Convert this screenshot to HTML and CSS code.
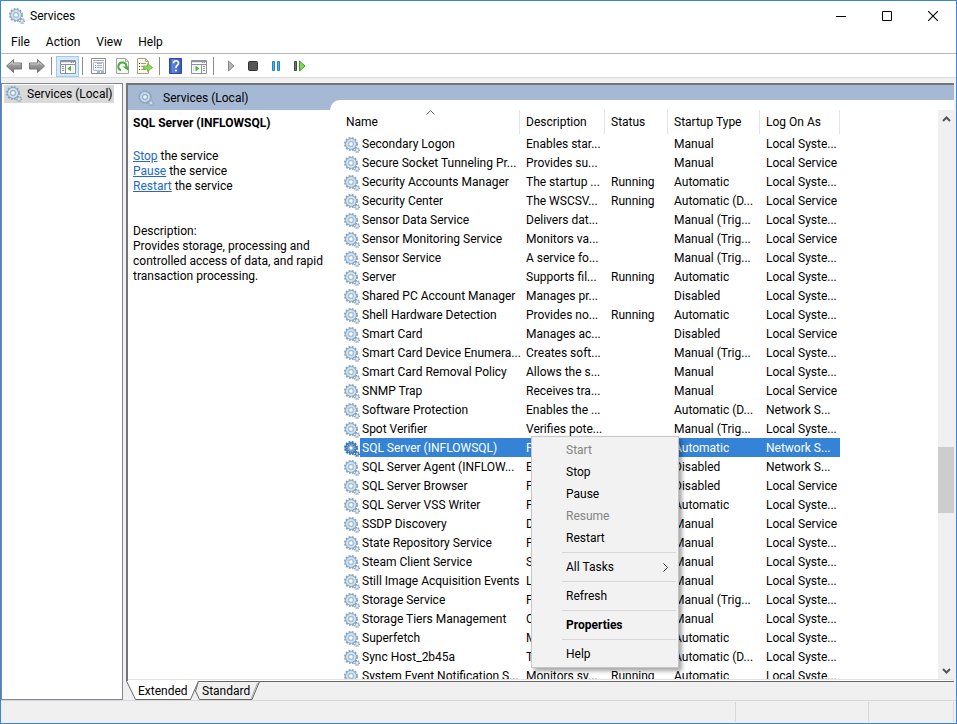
FILE: index.html
```html
<!DOCTYPE html>
<html lang="en">
<head>
<meta charset="utf-8">
<title>Services</title>
<link rel="stylesheet" href="styles.css">
</head>
<body>
<svg class="defs" aria-hidden="true">
  <symbol id="gears" viewBox="0 0 16 16">
    <circle cx="7" cy="7" r="6" fill="none" stroke="#8aa3b8" stroke-width="2" stroke-dasharray="1.9 1.24"/>
    <circle cx="7" cy="7" r="4.2" fill="none" stroke="#86a2ba" stroke-width="3"/>
    <circle cx="7" cy="7" r="4" fill="none" stroke="#c9e4f5" stroke-width="2"/>
    <circle cx="7" cy="7" r="2.3" fill="#fff" stroke="#7893aa" stroke-width=".7"/>
    <circle cx="13" cy="13" r="2.4" fill="none" stroke="#8499ab" stroke-width="1.2" stroke-dasharray="1 .88"/>
    <circle cx="13" cy="13" r="1.5" fill="#fff" stroke="#a3bccd" stroke-width="1.2"/>
  </symbol>
  <symbol id="gears-selected" viewBox="0 0 16 16">
    <circle cx="7" cy="7" r="6" fill="none" stroke="#3477b4" stroke-width="2" stroke-dasharray="1.9 1.24"/>
    <circle cx="7" cy="7" r="4.2" fill="none" stroke="#3375b5" stroke-width="3"/>
    <circle cx="7" cy="7" r="4" fill="none" stroke="#8fc0e8" stroke-width="1.5" stroke-dasharray="1 1"/>
    <circle cx="7" cy="7" r="2.2" fill="#fff" stroke="#3c78ad" stroke-width=".8"/>
    <circle cx="13" cy="13" r="2.4" fill="none" stroke="#33649b" stroke-width="1.2" stroke-dasharray="1 .88"/>
    <circle cx="13" cy="13" r="1.5" fill="#cfe4f5" stroke="#3c78ad" stroke-width="1.2"/>
  </symbol>
  <linearGradient id="steel" x1="0" y1="0" x2="0" y2="1"><stop offset="0" stop-color="#b5b5b5"/><stop offset="1" stop-color="#777"/></linearGradient>
  <linearGradient id="blue" x1="0" y1="0" x2="1" y2="0"><stop offset="0" stop-color="#2c4fb4"/><stop offset=".25" stop-color="#6385dc"/><stop offset="1" stop-color="#3557bb"/></linearGradient>
</svg>

<div class="window">
  <header class="titlebar">
    <svg class="icon"><use href="#gears"/></svg>
    <h1>Services</h1>
    <div class="caption">
      <button aria-label="Minimize"><svg width="10" height="10"><path d="M0 5.5h10" stroke="#000"/></svg></button>
      <button aria-label="Maximize"><svg width="10" height="10"><path d="M.5.5h9v9h-9z" fill="none" stroke="#000"/></svg></button>
      <button aria-label="Close"><svg width="10" height="10"><path d="M0 0l10 10M10 0L0 10" stroke="#000" stroke-width="1.1"/></svg></button>
    </div>
  </header>

  <nav class="menubar" aria-label="Main menu">
    <button>File</button><button>Action</button><button>View</button><button>Help</button>
  </nav>

  <div class="toolbar" role="toolbar" aria-label="Tools">
    <button aria-label="Back"><svg class="icon" viewBox="0 0 16 16"><path d="M.5 8L7.5 1.5v3.500h8v6h-8v3.500z" fill="url(#steel)" stroke="#777"/><path d="M2.500 7.500L6.500 4v2h8" fill="none" stroke="#ccc"/></svg></button>
    <button aria-label="Forward"><svg class="icon" viewBox="0 0 16 16"><path d="M15.500 8L8.500 1.500v3.500h-8v6h8v3.500z" fill="url(#steel)" stroke="#777"/><path d="M1.500 6h8V4l3.500 3.500" fill="none" stroke="#ccc"/></svg></button>
    <span class="sep"></span>
    <button class="pressed" aria-label="Show console tree"><svg class="icon" viewBox="0 0 16 16"><path d="M.5 2.500h15v13H.5z" fill="#fff" stroke="#8c929b"/><path d="M1 3h14v2H1z" fill="#8c96a8"/><path d="M1 4.500h10M12 4.500h1M14 4.500h1" stroke="#dfe5ee"/><path d="M1 6.500h14M5.500 7v8" stroke="#8c929b"/><path d="M2 8.500h2M2 10.500h2M2 12.500h2" stroke="#778ca8"/><path d="M11 7.500v6L7.500 10.500z" fill="#54b038"/><path d="M13 7v8" stroke="#dfe5ee"/></svg></button>
    <span class="sep"></span>
    <button aria-label="Properties"><svg class="icon" viewBox="0 0 16 16"><path d="M.5.5h14v15H.5z" fill="#fff" stroke="#8c8c8c"/><path d="M2 2.500h11" stroke="#a0a7b0"/><path d="M2.500 4.500h10v8h-10z" fill="#f4f6f8" stroke="#b4bbc5"/><path d="M4 7.500h1M4 9.500h1" stroke="#38a8d8"/><path d="M6 5.500h5M6 7.500h5M6 9.500h5" stroke="#a9b0ba"/><path d="M6 14h3M10 14h3" stroke="#7fc4e4" stroke-width="2"/></svg></button>
    <button aria-label="Refresh"><svg class="icon" viewBox="0 0 16 16"><path d="M2.500.5h9l3 3v12h-12z" fill="#fafafa" stroke="#a5a5a5"/><path d="M11.500.5v3h3" fill="none" stroke="#a5a5a5"/><path d="M7 12.300A4 4 0 1 1 12.300 9" fill="none" stroke="#4cab3c" stroke-width="2"/><path d="M8.500 8.500h6v4.500z" fill="#4cab3c"/></svg></button>
    <button aria-label="Export list"><svg class="icon" viewBox="0 0 16 16"><path d="M.5.5h8l3 3v12H.5z" fill="#fffbe4" stroke="#a5a18b"/><path d="M8.500.5v3h3" fill="none" stroke="#a5a18b"/><path d="M2 5.500h1M2 8.500h1M2 11.500h1" stroke="#333"/><path d="M4 5.500h5M4 8.500h4M4 11.500h5" stroke="#9a90b4"/><path d="M6.500 8h4V5.500l5 4-5 4V11h-4z" fill="#90d45d" stroke="#5fb13a" stroke-width=".8"/></svg></button>
    <span class="sep"></span>
    <button aria-label="Help"><svg class="icon" viewBox="0 0 16 16"><path d="M1.500.5h12v15h-12z" fill="url(#blue)" stroke="#2c48a4"/><path d="M5.500 5.300c0-3.500 5.200-3.300 5 0C10.300 7.400 8 7.200 8 10" fill="none" stroke="#fff" stroke-width="1.700"/><circle cx="8" cy="12.500" r="1.100" fill="#fff"/></svg></button>
    <button aria-label="Show action pane"><svg class="icon" viewBox="0 0 16 16"><path d="M.5 2.500h15v13H.5z" fill="#fff" stroke="#8c929b"/><path d="M1 3h14v2H1z" fill="#8c96a8"/><path d="M1 4.500h10M12 4.500h1M14 4.500h1" stroke="#dfe5ee"/><path d="M1 6.500h14M10.500 7v8" stroke="#8c929b"/><path d="M12 8.500h2M12 10.500h2M12 12.500h2" stroke="#778ca8"/><path d="M4.500 7.500v6l4-3z" fill="#54b038"/><path d="M2.500 7v8" stroke="#dfe5ee"/></svg></button>
    <span class="sep"></span>
    <button aria-label="Start service"><svg class="icon" viewBox="0 0 16 16"><path d="M6.500 3v10l5.500-5z" fill="#b4b4b4" stroke="#888"/></svg></button>
    <button aria-label="Stop service"><svg class="icon" viewBox="0 0 16 16"><rect x="3.500" y="3.500" width="9" height="9" rx="1" fill="#555" stroke="#333"/></svg></button>
    <button aria-label="Pause service"><svg class="icon" viewBox="0 0 16 16"><path d="M4.500 3.500h2v9h-2zM9.500 3.500h2v9h-2z" fill="#51b4ec" stroke="#2382c2"/></svg></button>
    <button aria-label="Restart service"><svg class="icon" viewBox="0 0 16 16"><path d="M3.500 3.500h2v9h-2z" fill="#777" stroke="#444"/><path d="M8.500 3v10l5.500-5z" fill="#7ed957" stroke="#35a020"/></svg></button>
  </div>

  <main class="workspace">
    <aside class="tree"><button class="node"><svg class="icon"><use href="#gears"/></svg>Services (Local)</button></aside>

    <section class="right">
      <div class="pane">
        <div class="pane-head">
          <h2><svg class="icon"><use href="#gears"/></svg>Services (Local)</h2>
          <span class="curve"></span>
        </div>
        <div class="pane-body">
          <div class="details">
            <h3>SQL Server (INFLOWSQL)</h3>
            <p><a href="#stop">Stop</a> the service<br><a href="#pause">Pause</a> the service<br><a href="#restart">Restart</a> the service</p>
            <p class="about">Description:<br>Provides storage, processing and controlled access of data, and rapid transaction processing.</p>
          </div>
          <div class="list">
            <div class="clip">
              <table>
                <colgroup><col class="c-name"><col class="c-desc"><col class="c-status"><col class="c-type"><col class="c-logon"></colgroup>
                <thead><tr>
                  <th>Name<svg class="sort" width="9" height="5"><path d="M.5 4.500l4-4 4 4" fill="none" stroke="#666"/></svg></th>
                  <th>Description</th><th>Status</th><th>Startup Type</th><th>Log On As</th>
                </tr></thead>
                <tbody id="rows"></tbody>
              </table>
            </div>
            <div class="scrollbar">
              <button aria-label="Scroll up"><svg width="9" height="6"><path d="M1 5l3.500-3.500L8 5" fill="none" stroke="#555" stroke-width="2"/></svg></button>
              <span class="above"></span><span class="thumb"></span><span class="below"></span>
              <button aria-label="Scroll down"><svg width="9" height="6"><path d="M1 1l3.500 3.500L8 1" fill="none" stroke="#555" stroke-width="2"/></svg></button>
            </div>
            <div class="context" role="menu">
              <button role="menuitem" disabled>Start</button>
              <button role="menuitem">Stop</button>
              <button role="menuitem">Pause</button>
              <button role="menuitem" disabled>Resume</button>
              <button role="menuitem">Restart</button>
              <hr>
              <button role="menuitem">All Tasks<svg width="5" height="9"><path d="M.5.5l4 4-4 4" fill="none" stroke="#333"/></svg></button>
              <hr>
              <button role="menuitem">Refresh</button>
              <hr>
              <button role="menuitem" class="default">Properties</button>
              <hr>
              <button role="menuitem">Help</button>
            </div>
          </div>
        </div>
      </div>
      <div class="tabs" role="tablist">
        <button role="tab" aria-selected="true" class="extended"><svg width="74" height="20"><path d="M0 0h73l-8 18.500H9z" fill="#fff"/><path d="M.5 0l9 18.500h55L72.500 0" fill="none" stroke="#666"/></svg><span>Extended</span></button>
        <button role="tab" aria-selected="false" class="standard"><svg width="66" height="20"><path d="M.5 10l3-9.500h61l-7.500 18H4.500z" fill="#f0f0f0" stroke="#666"/><path d="M62.500 2L56 18" stroke="#aaa"/></svg><span>Standard</span></button>
        <span class="rest"></span>
      </div>
    </section>
  </main>

  <footer class="status"><span class="wide"></span><span class="mid"></span><span class="small"></span></footer>
</div>
<script src="script.js"></script>
</body>
</html>
```
FILE: styles.css
```css
* { box-sizing: border-box; }

body {
  margin: 0;
  color: #000;
  font: 12px/15px "Segoe UI", Roboto, "Open Sans", sans-serif;
}

h1, h2, h3, p { margin: 0; font-size: 12px; font-weight: 400; }

button {
  display: flex;
  align-items: center;
  padding: 0;
  border: 0;
  background: none;
  color: inherit;
  font: inherit;
}

svg { display: block; flex: none; }
.defs { position: absolute; width: 0; height: 0; }
.icon { width: 16px; height: 16px; }

.window {
  display: flex;
  flex-direction: column;
  height: 100vh;
  border: 1px solid #3b86d4;
  background: #f0f0f0;
}

.titlebar {
  display: flex;
  align-items: center;
  gap: 5px;
  height: 30px;
  padding-left: 8px;
  background: #fff;
}
.caption { display: flex; margin-left: auto; height: 28px; }
.caption button { width: 46px; justify-content: center; }

.menubar {
  display: flex;
  gap: 16px;
  height: 23px;
  padding: 0 10px;
  border-bottom: 1px solid #b8b8b8;
  background: #fff;
}

.toolbar {
  display: flex;
  align-items: center;
  height: 24px;
  padding: 1px 0 0 1px;
  border-bottom: 1px solid #dcdcdc;
  background: #fff;
}
.toolbar button { width: 23px; height: 21px; justify-content: center; }
.toolbar .pressed { border: 1px solid #99cbf5; background: #d5e9fa; }
.sep { width: 1px; height: 18px; margin: 0 4px 0 3px; background: #8c8c8c; }

.workspace {
  display: flex;
  flex: 1;
  gap: 3px;
  min-height: 0;
  padding-top: 5px;
}

.tree {
  width: 122px;
  padding: 1px 2px;
  border: 1px solid #828790;
  background: #fff;
}
.node { height: 18px; gap: 5px; padding: 0 1px 0 2px; background: #d9d9d9; }

.right { display: flex; flex: 1; flex-direction: column; min-width: 0; padding-right: 2px; }
.pane {
  display: flex;
  flex: 1;
  flex-direction: column;
  min-height: 0;
  padding-bottom: 1px;
  border: solid #757575;
  border-width: 2px 0 0 2px;
  background: #fff;
}
.pane-head { display: flex; height: 25px; background: #a6b9d4; }
.pane-head h2 { display: flex; align-items: center; gap: 9px; width: 202px; padding: 1px 0 0 10px; }
.pane-head .icon { opacity: .8; }
.curve { flex: 1; height: 10px; align-self: flex-end; border-top-left-radius: 10px; background: #fff; }

.pane-body { display: flex; flex: 1; min-height: 0; border-bottom: 1px solid #e3e3e3; }
.details { width: 212px; padding: 6px 10px 0 5px; }
.details h3 { font-weight: 700; }
.details p { margin-top: 18px; }
.details .about { margin-top: 30px; }
a { color: #2468c8; }

.list { position: relative; display: flex; flex: 1; min-width: 0; }
.clip { flex: 1; min-width: 0; overflow: hidden; }
table { width: 500px; table-layout: fixed; border-collapse: separate; border-spacing: 0; }
.c-name { width: 180px; }
.c-desc { width: 85px; }
.c-status { width: 63px; }
.c-type { width: 92px; }
.c-logon { width: 80px; }
th, td { padding: 0 0 0 6px; font-weight: 400; text-align: left; white-space: nowrap; }
th { position: relative; height: 24px; border-right: 1px solid #e5e5e5; }
td { height: 19px; padding-top: 2px; line-height: 17px; }
.sort { position: absolute; top: 0; left: 86px; }
td:first-child { padding-left: 4px; }
.name { display: flex; align-items: center; gap: 2px; }
.selected td { background: #3583d6; color: #fff; }
.selected td:first-child { background: linear-gradient(90deg, #fff 20px, #3583d6 20px); }

.scrollbar { display: flex; flex-direction: column; width: 16px; background: #f0f0f0; }
.scrollbar button { height: 17px; justify-content: center; }
.above { flex: 320; }
.below { flex: 149; }
.thumb { flex: 66; background: #cdcdcd; }

.context {
  position: absolute;
  top: 326px;
  left: 191px;
  width: 148px;
  padding: 2px;
  border: 1px solid #c6c6c6;
  background: #f2f2f2;
  box-shadow: 3px 3px 4px rgba(0, 0, 0, .35);
}
.context button { width: 100%; height: 22px; padding: 0 8px 0 32px; justify-content: space-between; }
.context button:disabled { color: #838383; }
.context .default { font-weight: 700; }
.context hr { height: 1px; margin: 3px 0 3px 28px; border: 0; background: #d8d8d8; }

.tabs { display: flex; height: 19px; }
.tabs button { position: relative; height: 19px; padding-top: 1px; }
.tabs svg { position: absolute; top: 0; left: 0; }
.tabs span { position: relative; }
.extended { z-index: 1; width: 69px; padding-left: 12px; }
.standard { width: 64px; padding-left: 7px; }
.rest { flex: 1; border-top: 1px solid #666; }

.status { display: flex; height: 23px; padding: 1px 2px 1px 0; border-top: 1px solid #d8d8d8; }
.status span { border-right: 1px solid #d8d8d8; }
.wide { flex: 1; }
.mid { width: 133px; }
.small { width: 85px; }
```
FILE: script.js
```js
const S = "Local Syste...", L = "Local Service", N = "Network S...";
const services = [
  ["Secondary Logon", "Enables star...", "", "Manual", S],
  ["Secure Socket Tunneling Pr...", "Provides su...", "", "Manual", L],
  ["Security Accounts Manager", "The startup ...", "Running", "Automatic", S],
  ["Security Center", "The WSCSV...", "Running", "Automatic (D...", L],
  ["Sensor Data Service", "Delivers dat...", "", "Manual (Trig...", S],
  ["Sensor Monitoring Service", "Monitors va...", "", "Manual (Trig...", L],
  ["Sensor Service", "A service fo...", "", "Manual (Trig...", S],
  ["Server", "Supports fil...", "Running", "Automatic", S],
  ["Shared PC Account Manager", "Manages pr...", "", "Disabled", S],
  ["Shell Hardware Detection", "Provides no...", "Running", "Automatic", S],
  ["Smart Card", "Manages ac...", "", "Disabled", L],
  ["Smart Card Device Enumera...", "Creates soft...", "", "Manual (Trig...", S],
  ["Smart Card Removal Policy", "Allows the s...", "", "Manual", S],
  ["SNMP Trap", "Receives tra...", "", "Manual", L],
  ["Software Protection", "Enables the ...", "", "Automatic (D...", N],
  ["Spot Verifier", "Verifies pote...", "", "Manual (Trig...", S],
  ["SQL Server (INFLOWSQL)", "P", "", "Automatic", N],
  ["SQL Server Agent (INFLOW...", "E", "", "Disabled", N],
  ["SQL Server Browser", "P", "", "Disabled", L],
  ["SQL Server VSS Writer", "P", "", "Automatic", S],
  ["SSDP Discovery", "D", "", "Manual", L],
  ["State Repository Service", "P", "", "Manual", S],
  ["Steam Client Service", "S", "", "Manual", S],
  ["Still Image Acquisition Events", "L", "", "Manual", S],
  ["Storage Service", "P", "", "Manual (Trig...", S],
  ["Storage Tiers Management", "O", "", "Manual", S],
  ["Superfetch", "M", "", "Automatic", S],
  ["Sync Host_2b45a", "T", "", "Automatic (D...", S],
  ["System Event Notification S...", "Monitors sy...", "Running", "Automatic", S]
];
const selected = 16;

document.getElementById("rows").innerHTML = services.map(([name, ...rest], i) => {
  const on = i === selected;
  const icon = `<svg class="icon"><use href="#gears${on ? "-selected" : ""}"/></svg>`;
  return `<tr${on ? ' class="selected"' : ""}><td><div class="name">${icon}${name}</div></td>` +
    rest.map(text => `<td>${text}</td>`).join("") + "</tr>";
}).join("");
```
